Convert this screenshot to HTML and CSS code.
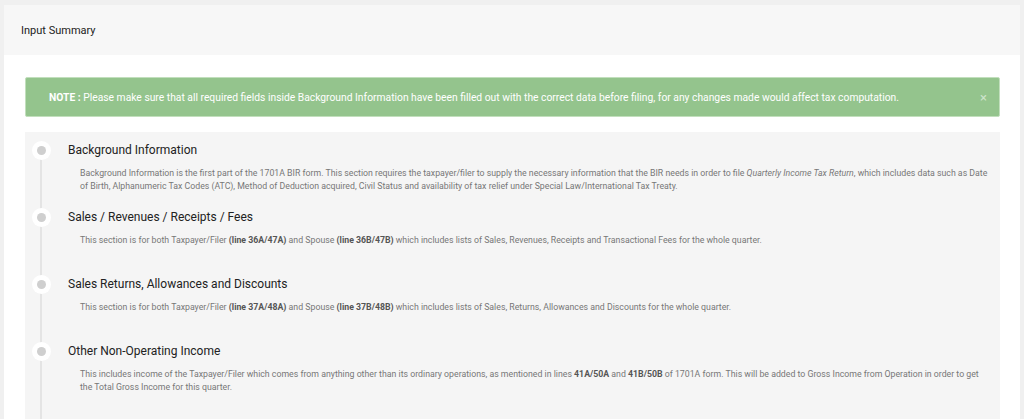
FILE: index.html
```html
<!DOCTYPE html>
<html lang="en">
<head>
<meta charset="utf-8">
<title>Input Summary</title>
<link rel="stylesheet" href="styles.css">
</head>
<body>
<div class="card">
  <div class="card-header">Input Summary</div>
  <div class="card-body">
    <div class="alert">
      <p class="alert-text"><b>NOTE :</b> Please make sure that all required fields inside Background Information have been filled out with the correct data before filing, for any changes made would affect tax computation.</p>
      <span class="alert-close">&times;</span>
    </div>
    <div class="timeline">
      <div class="item">
        <div class="marker"><span class="dot"></span></div>
        <div class="content">
          <h3 class="title">Background Information</h3>
          <p class="desc">Background Information is the first part of the 1701A BIR form. This section requires the taxpayer/filer to supply the necessary information that the BIR needs in order to file <i>Quarterly Income Tax Return</i>, which includes data such as Date of Birth, Alphanumeric Tax Codes (ATC), Method of Deduction acquired, Civil Status and availability of tax relief under Special Law/International Tax Treaty.</p>
        </div>
      </div>
      <div class="item">
        <div class="marker"><span class="dot"></span></div>
        <div class="content">
          <h3 class="title">Sales / Revenues / Receipts / Fees</h3>
          <p class="desc">This section is for both Taxpayer/Filer <b>(line 36A/47A)</b> and Spouse <b>(line 36B/47B)</b> which includes lists of Sales, Revenues, Receipts and Transactional Fees for the whole quarter.</p>
        </div>
      </div>
      <div class="item">
        <div class="marker"><span class="dot"></span></div>
        <div class="content">
          <h3 class="title">Sales Returns, Allowances and Discounts</h3>
          <p class="desc">This section is for both Taxpayer/Filer <b>(line 37A/48A)</b> and Spouse <b>(line 37B/48B)</b> which includes lists of Sales, Returns, Allowances and Discounts for the whole quarter.</p>
        </div>
      </div>
      <div class="item item-last">
        <div class="marker"><span class="dot"></span></div>
        <div class="content">
          <h3 class="title">Other Non-Operating Income</h3>
          <p class="desc">This includes income of the Taxpayer/Filer which comes from anything other than its ordinary operations, as mentioned in lines <b>41A/50A</b> and <b>41B/50B</b> of 1701A form. This will be added to Gross Income from Operation in order to get the Total Gross Income for this quarter.</p>
        </div>
      </div>
    </div>
  </div>
</div>
</body>
</html>
```

FILE: styles.css
```css
* { box-sizing: border-box; }

html, body {
  margin: 0;
  padding: 0;
  background: #f0f0f0;
  font-family: Roboto, "Liberation Sans", Arial, sans-serif;
  overflow: hidden;
}

.card {
  margin: 5px 4px 0 4px;
  background: #ffffff;
  height: 414px;
}

.card-header {
  height: 50px;
  background: #f7f7f7;
  display: flex;
  align-items: center;
  padding-left: 17px;
  font-size: 11px;
  color: #222;
}

.card-body {
  padding: 22px 20px 0 21px;
}

.alert {
  height: 40px;
  background: #94c48d;
  border: 1px solid #c2dfbd;
  border-radius: 2px;
  display: flex;
  align-items: center;
  justify-content: space-between;
  padding: 0 12px 0 23px;
  color: #ffffff;
}

.alert-text {
  margin: 0;
  font-size: 10.3px;
}

.alert-text b {
  font-weight: 700;
}

.alert-close {
  font-size: 13px;
  color: rgba(255, 255, 255, 0.55);
  line-height: 1;
}

.timeline {
  margin-top: 15px;
  background: #f5f5f5;
  padding: 9px 11px 0 6px;
}

.item {
  display: grid;
  grid-template-columns: 20px 1fr;
  column-gap: 17px;
  min-height: 67px;
}

.item-last {
  min-height: 90px;
}

.marker {
  background: linear-gradient(#e4e4e4, #e4e4e4) no-repeat center top / 2px 100%;
  display: flex;
  justify-content: center;
  align-items: flex-start;
}

.item:first-child .marker {
  background-position: center 9px;
}

.dot {
  width: 19px;
  height: 19px;
  border-radius: 50%;
  background: #ffffff;
  display: flex;
  align-items: center;
  justify-content: center;
}

.dot::after {
  content: "";
  width: 9px;
  height: 9px;
  border-radius: 50%;
  background: #cfcfcf;
}

.content {
  min-width: 0;
}

.title {
  margin: 0;
  font-size: 12px;
  font-weight: 400;
  line-height: 18px;
  color: #222;
}

.desc {
  margin: 8px 0 0 12px;
  font-size: 8.75px;
  line-height: 13px;
  color: #777;
}

.desc b {
  color: #555;
  font-weight: 700;
}
```
